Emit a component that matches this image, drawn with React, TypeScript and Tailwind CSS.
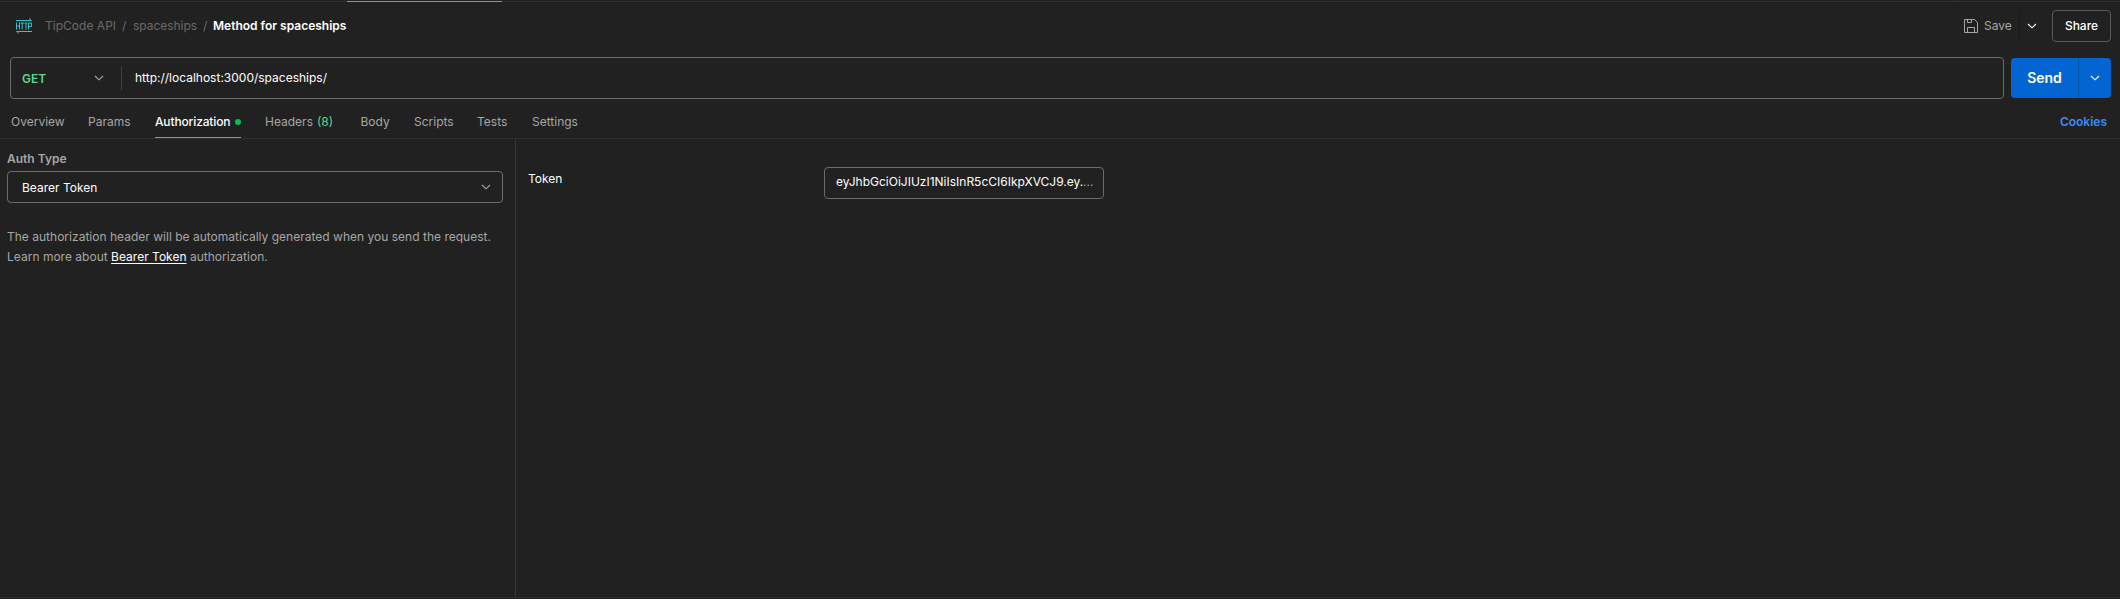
import type { ReactNode } from "react";

function Chevron({ className = "" }: { className?: string }) {
  return (
    <svg width="10" height="6" viewBox="0 0 10 6" fill="none" stroke="currentColor" strokeWidth="1.1" className={className}>
      <path d="M1 1 L5 4.8 L9 1" />
    </svg>
  );
}

function HttpIcon() {
  return (
    <svg width="16" height="16" viewBox="0 0 16 16" fill="none" stroke="#35c3d4" strokeWidth="1" className="shrink-0">
      <path d="M0 2.5H15.5M13 .3L15.3 2.5M16 13.5H.5M3 15.7L.7 13.5" />
      <path d="M.5 4.5V11.5M3.5 4.5V11.5M.5 8H3.5M4.5 5H8M6.2 5V11.5M8.5 5H11.5M10 5V11.5M12.5 11.5V5H15.5V8.5H12.5" />
    </svg>
  );
}

function SaveIcon() {
  return (
    <svg width="14" height="14" viewBox="0 0 14 14" fill="none" stroke="#a6a6a6" className="shrink-0">
      <path d="M.5 .5H10.5L13.5 3.5V13.5H.5ZM3.5 .5V3.5H7.5V.5M3.5 13.5V8.5H10.5V13.5" />
    </svg>
  );
}

function Tab({ children, width }: { children: ReactNode; width: string }) {
  return <div className={"flex h-8 items-center " + width}>{children}</div>;
}

export default function App() {
  return (
    <div className="flex h-[599px] w-[2120px] flex-col overflow-hidden whitespace-nowrap bg-[#212121] font-['Inter',sans-serif] text-[12px] leading-5 text-[#a6a6a6]">
      <div className="flex h-0.5 shrink-0 items-end">
        <div className="h-px w-[347px] bg-[#303030]" />
        <div className="h-px w-[155px] bg-[#ff6c37]" />
        <div className="h-px w-[1455px] bg-[#303030]" />
        <div className="h-0.5 w-px bg-[#303030]" />
        <div className="h-px flex-1 bg-[#303030]" />
      </div>

      <header className="flex h-[55px] shrink-0 items-start pl-4 pr-[9px] pt-2">
        <div className="flex h-8 flex-1 items-center text-[#6b6b6b]">
          <HttpIcon />
          <span className="ml-[13px] w-[77px] tracking-[0.02px]">TipCode API</span>
          <span className="w-[11px]">/</span>
          <span className="w-[70px] tracking-[-0.03px]">spaceships</span>
          <span className="w-[10px]">/</span>
          <span className="font-semibold text-white">Method for spaceships</span>
        </div>
        <div className="flex h-8 items-center">
          <SaveIcon />
          <span className="ml-1.5 w-[35px]">Save</span>
          <div className="h-8 w-px bg-[#191919]" />
          <Chevron className="ml-[7px] text-white" />
          <div className="ml-[15px] flex h-8 w-[59px] items-center justify-center rounded border border-[#5a5a5a] font-medium text-white">
            Share
          </div>
        </div>
      </header>

      <div className="flex h-[42px] shrink-0 items-center pl-2.5 pr-[9px]">
        <div className="flex h-[42px] w-[1994px] items-center rounded border border-[#6b6b6b]">
          <span className="ml-[11px] w-[72px] pt-0.5 font-semibold text-[#5fd490]">GET</span>
          <Chevron />
          <div className="ml-[17px] h-6 w-px bg-[#404040]" />
          <span className="ml-[13px] text-white">http://localhost:3000/spaceships/</span>
        </div>
        <div className="ml-[7px] flex h-10 flex-1 items-center rounded bg-[#0265d2] text-white">
          <span className="w-[67px] text-center text-[14px] font-semibold">Send</span>
          <div className="h-full w-px bg-[#0453ab]" />
          <Chevron className="ml-[11px]" />
        </div>
      </div>

      <nav className="flex h-10 shrink-0 items-start border-b border-[#303030] pl-[11px] pr-[13px] pt-[7px]">
        <Tab width="w-[77px]">Overview</Tab>
        <Tab width="w-[67px]">Params</Tab>
        <div className="mr-6 flex h-8 w-[86px] items-center justify-between border-b border-[#ff6c37] font-medium tracking-[-0.14px] text-white">
          Authorization
          <span className="size-1.5 rounded-full bg-[#0cbb52]" />
        </div>
        <Tab width="w-[95.5px]">
          Headers<span className="ml-1 text-[#5fd490]">(8)</span>
        </Tab>
        <Tab width="w-[53.5px]">Body</Tab>
        <Tab width="w-[63px]">Scripts</Tab>
        <Tab width="w-[55px]">Tests</Tab>
        <Tab width="flex-1">Settings</Tab>
        <div className="flex h-8 items-center font-semibold text-[#3d8bf8]">Cookies</div>
      </nav>

      <main className="flex h-[458px] shrink-0">
        <section className="w-[516px] border-r border-[#353535] pl-[7px] pr-[12px] pt-[10px]">
          <div className="h-[22px] font-semibold">Auth Type</div>
          <div className="flex h-8 w-[496px] items-center justify-between rounded border border-[#6b6b6b] pl-3.5 pr-[11px]">
            <span className="pt-0.5 text-white">Bearer Token</span>
            <Chevron />
          </div>
          <p className="mt-6 tracking-[0.012px]">
            The authorization header will be automatically generated when you send the request.
            <br />
            Learn more about <span className="text-white underline underline-offset-2">Bearer Token</span> authorization.
          </p>
        </section>
        <section className="flex flex-1 items-start pl-3 pt-7">
          <div className="flex h-6 w-[296px] items-center text-white">Token</div>
          <div className="flex h-8 w-[280px] items-center rounded border border-[#6b6b6b] pb-0.5 pl-[11px]">
            <span className="w-[247px] text-white">eyJhbGciOiJIUzI1NiIsInR5cCI6IkpXVCJ9.ey.</span>
            <span>...</span>
          </div>
        </section>
      </main>
      <div className="h-px shrink-0 bg-[#303030]" />
    </div>
  );
}
